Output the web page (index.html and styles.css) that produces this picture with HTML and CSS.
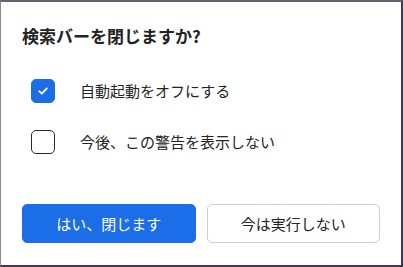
FILE: index.html
```html
<!DOCTYPE html>
<html lang="ja">
<head>
<meta charset="utf-8">
<link rel="stylesheet" href="styles.css">
</head>
<body>
<div class="dialog">
  <div class="title">検索バーを閉じますか?</div>
  <div class="options">
    <label class="option">
      <span class="box checked">
        <svg width="12" height="10" viewBox="0 0 12 10"><path d="M2.2 5.2 L4.8 7.6 L9.8 2.4" fill="none" stroke="#fff" stroke-width="1.8" stroke-linecap="round" stroke-linejoin="round"/></svg>
      </span>
      <span class="label">自動起動をオフにする</span>
    </label>
    <label class="option">
      <span class="box"></span>
      <span class="label">今後、この警告を表示しない</span>
    </label>
  </div>
  <div class="actions">
    <button class="btn primary">はい、閉じます</button>
    <button class="btn secondary">今は実行しない</button>
  </div>
</div>
</body>
</html>
```
FILE: styles.css
```css
html, body {
  margin: 0;
  padding: 0;
  background: #fff;
}
.dialog {
  width: 403px;
  height: 267px;
  box-sizing: border-box;
  border-top: 2px solid #6a6073;
  border-left: 1px solid #8c8890;
  border-right: 2px solid #44394c;
  border-bottom: 2px solid #44394c;
  padding: 22px 21px 0 21px;
  font-family: "Noto Sans CJK JP", "Noto Sans", sans-serif;
  color: #232323;
  display: flex;
  flex-direction: column;
}
.title {
  font-size: 17px;
  font-weight: 700;
  line-height: 24px;
  height: 24px;
}
.options {
  margin-top: 31px;
  padding-left: 9px;
  display: flex;
  flex-direction: column;
  gap: 27px;
}
.option {
  display: flex;
  align-items: center;
  height: 24px;
  gap: 25px;
}
.box {
  width: 24px;
  height: 24px;
  box-sizing: border-box;
  border: 1.5px solid #2b2b2b;
  border-radius: 5px;
  display: flex;
  align-items: center;
  justify-content: center;
  flex: none;
}
.box.checked {
  background: #1b6ee8;
  border-color: #1b6ee8;
}
.label {
  font-size: 15px;
  line-height: 24px;
  color: #232323;
}
.actions {
  margin-top: 50px;
  display: flex;
  gap: 11px;
}
.btn {
  flex: 1;
  height: 39px;
  box-sizing: border-box;
  border-radius: 5px;
  font-family: inherit;
  font-size: 15px;
  padding: 0;
}
.primary {
  background: #1b6ee8;
  border: 1px solid #1b6ee8;
  color: #fff;
}
.secondary {
  background: #fff;
  border: 1px solid #cfcfcf;
  color: #232323;
}
```
